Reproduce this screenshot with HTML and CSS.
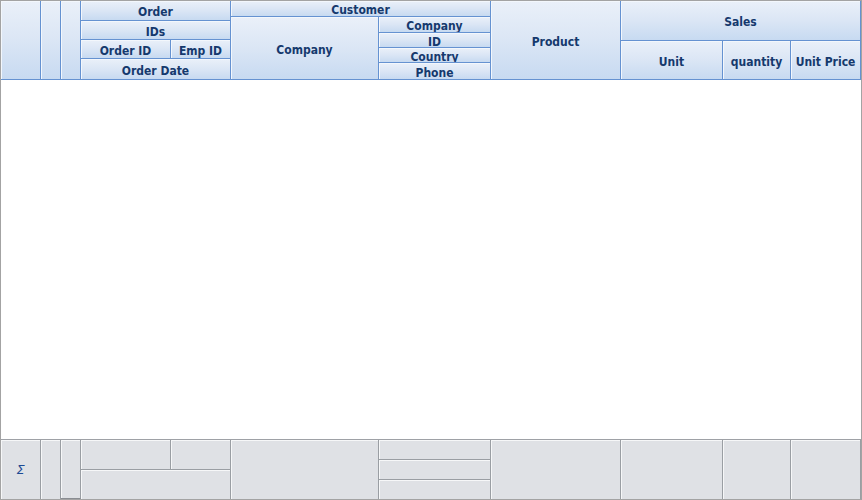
FILE: index.html
```html
<!DOCTYPE html>
<html>
<head>
<meta charset="utf-8">
<link rel="stylesheet" href="styles.css">
</head>
<body>
<div class="grid">
  <div class="header">
    <div class="hcell w40 full"></div>
    <div class="hcell w20 full"></div>
    <div class="hcell w20 full"></div>
    <div class="group w150">
      <div class="hcell h20 top">Order</div>
      <div class="hcell h19">IDs</div>
      <div class="row">
        <div class="hcell w90 h19">Order ID</div>
        <div class="hcell w60 h19">Emp ID</div>
      </div>
      <div class="hcell h21">Order Date</div>
    </div>
    <div class="group w260">
      <div class="hcell h16 top">Customer</div>
      <div class="row">
        <div class="hcell w148 h63">Company</div>
        <div class="group w112">
          <div class="hcell h16 top">Company</div>
          <div class="hcell h15">ID</div>
          <div class="hcell h15">Country</div>
          <div class="hcell h17">Phone</div>
        </div>
      </div>
    </div>
    <div class="hcell w130 full">Product</div>
    <div class="group w240">
      <div class="hcell h40 top">Sales</div>
      <div class="row">
        <div class="hcell w102 h39">Unit</div>
        <div class="hcell w68 h39">quantity</div>
        <div class="hcell w70 h39">Unit Price</div>
      </div>
    </div>
  </div>
  <div class="body"></div>
  <div class="footer">
    <div class="fcell w40 ffull"><span class="sigma">Σ</span></div>
    <div class="fcell w20 ffull"></div>
    <div class="fcell w20 ffull dark"></div>
    <div class="group w150">
      <div class="row">
        <div class="fcell w90 h30"></div>
        <div class="fcell w60 h30"></div>
      </div>
      <div class="fcell h29"></div>
    </div>
    <div class="fcell w148 ffull"></div>
    <div class="group w112">
      <div class="fcell h20"></div>
      <div class="fcell h20"></div>
      <div class="fcell h19"></div>
    </div>
    <div class="fcell w130 ffull"></div>
    <div class="fcell w102 ffull"></div>
    <div class="fcell w68 ffull"></div>
    <div class="fcell w70 ffull"></div>
  </div>
</div>
</body>
</html>
```

FILE: styles.css
```css
html, body {
  margin: 0;
  padding: 0;
  background: #ffffff;
}

.grid {
  width: 862px;
  height: 500px;
  box-sizing: border-box;
  border: 1px solid #a3a3a3;
  display: flex;
  flex-direction: column;
  font-family: "DejaVu Sans Condensed", "DejaVu Sans", Tahoma, sans-serif;
  font-weight: bold;
  font-size: 12px;
  color: #15396d;
}

.header {
  display: flex;
  height: 79px;
  flex: none;
}

.group {
  display: flex;
  flex-direction: column;
  flex: none;
}

.row {
  display: flex;
  flex: none;
}

.hcell {
  box-sizing: border-box;
  border-right: 1px solid #6592d1;
  border-bottom: 1px solid #6592d1;
  background: linear-gradient(to bottom, #eaf0f9 0%, #dbe6f5 50%, #c7daf1 100%);
  box-shadow: inset 1px 1px 0 #f3f7fc;
  display: flex;
  align-items: center;
  justify-content: center;
  white-space: nowrap;
  overflow: hidden;
  line-height: 12px;
  padding-top: 3px;
  flex: none;
}

.hcell.top { padding-top: 2px; }

.full { height: 79px; }

.body {
  height: 359px;
  flex: none;
  background: #ffffff;
}

.footer {
  display: flex;
  flex: none;
  height: 60px;
  border-top: 1px solid #9ea1a6;
  box-sizing: border-box;
  background: #dfe1e5;
}

.fcell {
  box-sizing: border-box;
  border-right: 1px solid #9a9ea3;
  background: #dfe1e5;
  box-shadow: inset 1px 1px 0 #f6f7f8;
  flex: none;
  display: flex;
  align-items: center;
  justify-content: center;
}

.ffull { height: 59px; }

.fcell.h30, .fcell.h20 {
  border-bottom: 1px solid #9a9ea3;
}

.fcell.dark {
  border-bottom: 1px solid #8a8d92;
}

.sigma {
  font-family: "DejaVu Sans", sans-serif;
  font-style: oblique;
  font-weight: normal;
  font-size: 13px;
  line-height: 13px;
  color: #1d4a94;
}

.w20 { width: 20px; }
.w40 { width: 40px; }
.w60 { width: 60px; }
.w68 { width: 68px; }
.w70 { width: 70px; }
.w90 { width: 90px; }
.w102 { width: 102px; }
.w112 { width: 112px; }
.w130 { width: 130px; }
.w148 { width: 148px; }
.w150 { width: 150px; }
.w240 { width: 240px; }
.w260 { width: 260px; }

.h15 { height: 15px; }
.h16 { height: 16px; }
.h17 { height: 17px; }
.h19 { height: 19px; }
.h20 { height: 20px; }
.h21 { height: 21px; }
.h29 { height: 29px; }
.h30 { height: 30px; }
.h39 { height: 39px; }
.h40 { height: 40px; }
.h63 { height: 63px; }
```
